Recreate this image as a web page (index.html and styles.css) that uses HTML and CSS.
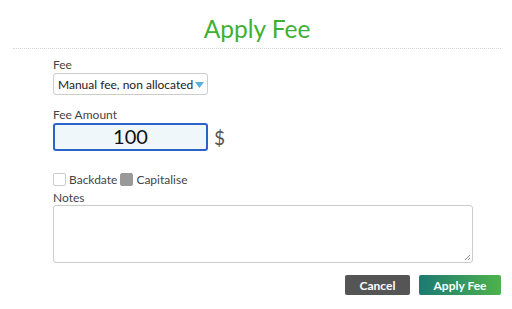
FILE: index.html
```html
<!DOCTYPE html>
<html>
<head>
<meta charset="utf-8">
<link rel="stylesheet" href="styles.css">
</head>
<body>
<div class="dialog">
  <div class="header"><h1 class="title">Apply Fee</h1></div>
  <div class="form">
    <div class="field">
      <label class="label">Fee</label>
      <div class="select">
        <span class="select-text">Manual fee, non allocated</span>
        <svg class="arrow" width="9" height="6" viewBox="0 0 9 6"><path d="M0 0H9L4.5 6Z" fill="#5aaee0"/></svg>
      </div>
    </div>
    <div class="field amount-field">
      <label class="label">Fee Amount</label>
      <div class="amount-row">
        <div class="amount">100</div>
        <span class="currency">$</span>
      </div>
    </div>
    <div class="checks">
      <span class="box"></span><span class="check-label">Backdate</span>
      <span class="box filled"></span><span class="check-label">Capitalise</span>
    </div>
    <label class="label notes-label">Notes</label>
    <div class="textarea">
      <svg class="grip" width="7" height="7" viewBox="0 0 7 7"><path d="M6 1L1 6M6 4L4 6" stroke="#888" stroke-width="1"/></svg>
    </div>
    <div class="actions">
      <button class="btn cancel">Cancel</button>
      <button class="btn apply">Apply Fee</button>
    </div>
  </div>
</div>
</body>
</html>
```
FILE: styles.css
```css
* { box-sizing: border-box; }
html, body { margin: 0; padding: 0; background: #fff; }
body { font-family: Lato, "Open Sans", sans-serif; color: #333; width: 512px; height: 309px; overflow: hidden; }
.header { margin: 0 11px 0 13px; height: 49px; border-bottom: 1px dotted #d6d6d6; display: flex; justify-content: center; align-items: flex-start; }
.title { margin: 14px 0 0; font-size: 24.5px; font-weight: 400; color: #3cb136; line-height: 30px; }
.form { padding: 9px 11px 0 53px; }
.label { display: block; font-size: 12px; color: #444; line-height: 14px; }
.select { margin-top: 1px; width: 155px; height: 22px; border: 1px solid #ccc; border-radius: 3px; display: flex; align-items: center; gap: 2px; padding: 0 3px 0 4px; font-size: 12px; color: #222; white-space: nowrap; }
.select-text { white-space: nowrap; }
.arrow { margin-top: 1px; flex: none; }
.amount-field { margin-top: 13px; }
.amount-row { display: flex; align-items: center; margin-top: 1px; }
.amount { width: 155px; height: 28px; border: 2px solid #2b63c8; border-radius: 3px; background: #eff7fa; font-size: 20px; color: #111; text-align: center; line-height: 23px; }
.currency { margin-left: 6px; font-size: 19px; color: #555; }
.checks { margin-top: 21px; display: flex; align-items: center; height: 14px; font-size: 12px; color: #444; }
.box { width: 13px; height: 13px; border: 1px solid #ccc; border-radius: 2px; background: #fff; }
.box.filled { background: #999; border-color: #999; margin-left: 3px; }
.check-label { margin-left: 3px; }
.notes-label { margin-top: 5px; font-size: 12px; }
.textarea { position: relative; margin-top: 0; width: 420px; height: 58px; border: 1px solid #ccc; border-radius: 3px; }
.grip { position: absolute; right: 1px; bottom: 1px; }
.actions { display: flex; justify-content: flex-end; gap: 9px; margin-top: 12px; }
.btn { font-family: Lato, "Open Sans", sans-serif; font-size: 12px; font-weight: 700; color: #fff; border: 0; border-radius: 2px; height: 20px; padding: 0; }
.cancel { width: 65px; background: #555; }
.apply { width: 82px; background: linear-gradient(to right, #1c7a72, #4db24c); }
```
